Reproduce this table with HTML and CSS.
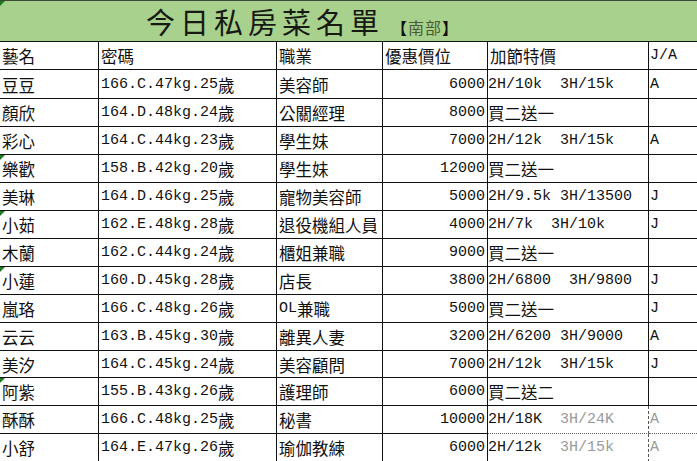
FILE: index.html
```html
<!DOCTYPE html>
<html lang="zh-Hant">
<head>
<meta charset="utf-8">
<title>今日私房菜名單</title>
<link rel="stylesheet" href="styles.css">
</head>
<body>
<div class="sheet">
  <div class="title mark"><span class="main">今日私房菜名單</span><span class="region"><b>【</b>南部<b>】</b></span></div>

  <div class="c">藝名</div><div class="c">密碼</div><div class="c">職業</div><div class="c">優惠價位</div><div class="c">加節特價</div><div class="c lat last">J/A</div>

  <div class="c">豆豆</div><div class="c"><span class="lat">166.C.47kg.25</span>歲</div><div class="c">美容師</div><div class="c lat num">6000</div><div class="c lat deal">2H/10k  3H/15k</div><div class="c lat last">A</div>
  <div class="c">顏欣</div><div class="c"><span class="lat">164.D.48kg.24</span>歲</div><div class="c">公關經理</div><div class="c lat num">8000</div><div class="c deal">買二送一</div><div class="c lat last"></div>
  <div class="c">彩心</div><div class="c"><span class="lat">164.C.44kg.23</span>歲</div><div class="c">學生妹</div><div class="c lat num">7000</div><div class="c lat deal">2H/12k  3H/15k</div><div class="c lat last">A</div>
  <div class="c mark">樂歡</div><div class="c"><span class="lat">158.B.42kg.20</span>歲</div><div class="c">學生妹</div><div class="c lat num">12000</div><div class="c deal">買二送一</div><div class="c lat last"></div>
  <div class="c">美琳</div><div class="c"><span class="lat">164.D.46kg.25</span>歲</div><div class="c">寵物美容師</div><div class="c lat num">5000</div><div class="c lat deal">2H/9.5k 3H/13500</div><div class="c lat last">J</div>
  <div class="c mark">小茹</div><div class="c"><span class="lat">162.E.48kg.28</span>歲</div><div class="c over">退役機組人員</div><div class="c lat num">4000</div><div class="c lat deal">2H/7k  3H/10k</div><div class="c lat last">J</div>
  <div class="c">木蘭</div><div class="c"><span class="lat">162.C.44kg.24</span>歲</div><div class="c">櫃姐兼職</div><div class="c lat num">9000</div><div class="c deal">買二送一</div><div class="c lat last"></div>
  <div class="c mark">小蓮</div><div class="c"><span class="lat">160.D.45kg.28</span>歲</div><div class="c">店長</div><div class="c lat num">3800</div><div class="c lat deal">2H/6800  3H/9800</div><div class="c lat last">J</div>
  <div class="c">嵐珞</div><div class="c"><span class="lat">166.C.48kg.26</span>歲</div><div class="c"><span class="lat">OL</span>兼職</div><div class="c lat num">5000</div><div class="c deal">買二送一</div><div class="c lat last">J</div>
  <div class="c">云云</div><div class="c"><span class="lat">163.B.45kg.30</span>歲</div><div class="c">離異人妻</div><div class="c lat num">3200</div><div class="c lat deal">2H/6200 3H/9000</div><div class="c lat last">A</div>
  <div class="c">美汐</div><div class="c"><span class="lat">164.C.45kg.24</span>歲</div><div class="c">美容顧問</div><div class="c lat num">7000</div><div class="c lat deal">2H/12k  3H/15k</div><div class="c lat last">J</div>
  <div class="c mark">阿紫</div><div class="c"><span class="lat">155.B.43kg.26</span>歲</div><div class="c">護理師</div><div class="c lat num">6000</div><div class="c deal">買二送二</div><div class="c lat last"></div>
  <div class="c">酥酥</div><div class="c"><span class="lat">166.C.48kg.25</span>歲</div><div class="c">秘書</div><div class="c lat num">10000</div><div class="c lat deal dotted-edge dotted-foot">2H/18K  <span class="faint">3H/24K</span></div><div class="c lat last faded dotted-foot">A</div>
  <div class="c">小舒</div><div class="c"><span class="lat">164.E.47kg.26</span>歲</div><div class="c">瑜伽教練</div><div class="c lat num">6000</div><div class="c lat deal dotted-edge">2H/12k  <span class="faint">3H/15k</span></div><div class="c lat last faded">A</div>
</div>
</body>
</html>
```

FILE: styles.css
```css
html, body {
  margin: 0;
  padding: 0;
  background: #ffffff;
  overflow: hidden;
}

.sheet {
  display: grid;
  grid-template-columns: 99px 178px 106px 105px 161px 48px;
  grid-template-rows: 42px 28px 29px repeat(9, 28px) 27px 28px 28px 28px;
  width: 697px;
  font-family: "Noto Sans CJK TC", "Noto Sans CJK SC", sans-serif;
  font-size: 16.5px;
  color: #111;
}

.title {
  grid-column: 1 / -1;
  position: relative;
  box-sizing: border-box;
  background: #a9d18e;
  border-top: 1px solid #3b4a33;
  border-bottom: 1px solid #111;
  display: flex;
  align-items: flex-end;
  padding-left: 146px;
  padding-bottom: 1px;
}

.main {
  font-size: 29px;
  letter-spacing: 5px;
  line-height: 37px;
  color: #161a12;
}

.region {
  font-size: 16px;
  line-height: 22px;
  letter-spacing: 1px;
  color: #4b5a33;
  margin-left: 7px;
  padding-bottom: 2px;
}

.region b {
  color: #111;
  font-weight: 700;
}

.c {
  position: relative;
  box-sizing: border-box;
  border-right: 1px solid #111;
  border-bottom: 1px solid #111;
  display: flex;
  align-items: center;
  padding: 1px 0 0 2px;
  white-space: pre;
  line-height: 20px;
  min-width: 0;
}

.c.last {
  border-right: none;
  padding-left: 1px;
}

.lat {
  font-family: "Liberation Mono", "DejaVu Sans Mono", monospace;
  font-size: 15px;
}

.num {
  justify-content: flex-end;
  padding-right: 2px;
}

.deal {
  padding-left: 0;
}

.over {
  z-index: 1;
}

.mark::before {
  content: "";
  position: absolute;
  top: 0;
  left: 0;
  border-top: 5px solid #1f7a1f;
  border-right: 5px solid transparent;
}

.faint {
  color: #9a9a9a;
}

.faded {
  color: #9a9a9a;
}

.dotted-edge {
  border-right: 1px dashed #555;
}

.dotted-foot {
  border-bottom: 1px dotted #666;
}
```
